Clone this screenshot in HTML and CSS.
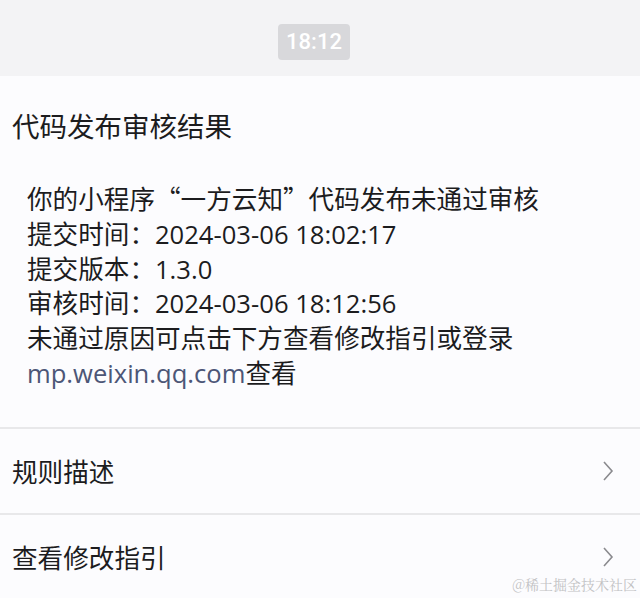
FILE: index.html
```html
<!DOCTYPE html>
<html>
<head>
	<meta charset="utf-8">
	<title>代码发布审核结果</title>
	<link rel="stylesheet" href="styles.css">
</head>
<body>
	<div class="top">
		<span class="time">18:12</span>
	</div>
	<div class="card">
		<h1>代码发布审核结果</h1>
		<div class="content">
			<p>你的小程序<span class="cjk">“</span>一方云知<span class="cjk">”</span>代码发布未通过审核</p>
			<p>提交时间：2024-03-06 18:02:17</p>
			<p>提交版本：1.3.0</p>
			<p>审核时间：2024-03-06 18:12:56</p>
			<p>未通过原因可点击下方查看修改指引或登录</p>
			<p><span class="link">mp.weixin.qq.com</span>查看</p>
		</div>
		<div class="row">
			<span>规则描述</span>
			<svg class="arrow" width="12" height="22" viewBox="0 0 12 22"><path d="M2 2 L10 11 L2 20" fill="none" stroke="#8a8a8e" stroke-width="1.6"/></svg>
		</div>
		<div class="row">
			<span>查看修改指引</span>
			<svg class="arrow" width="12" height="22" viewBox="0 0 12 22"><path d="M2 2 L10 11 L2 20" fill="none" stroke="#8a8a8e" stroke-width="1.6"/></svg>
		</div>
	</div>
	<div class="mark">@稀土掘金技术社区</div>
</body>
</html>
```

FILE: styles.css
```css
body {
	margin: 0;
	background-color: #fcfcfe;
	font-family: "Open Sans", "Noto Sans CJK SC", sans-serif;
	color: #1c1c1e;
	height: 598px;
	overflow: hidden;
	position: relative;
}

.top {
	height: 76px;
	box-sizing: border-box;
	padding-top: 8px;
	background-color: #f3f3f5;
	display: flex;
	justify-content: center;
	align-items: center;
}

.time {
	background-color: #d8d8db;
	color: #ffffff;
	font-family: "Roboto", sans-serif;
	font-weight: 500;
	font-size: 22px;
	line-height: 36px;
	width: 72px;
	text-align: center;
	border-radius: 4px;
	margin-right: 12px;
}

.card {
	background-color: #fcfcfe;
}

h1 {
	font-size: 27.5px;
	font-weight: normal;
	line-height: 36px;
	margin: 0;
	padding: 33px 0 0 12px;
}

.content {
	padding: 38px 0 35px 27px;
}

.content p {
	margin: 0;
	font-size: 25.6px;
	line-height: 34.8px;
}

.cjk {
	font-family: "Noto Sans CJK SC", sans-serif;
	line-height: 1;
}

.link {
	color: #4c5677;
}

.row {
	display: flex;
	justify-content: space-between;
	align-items: center;
	height: 84px;
	border-top: 2px solid #e8e8ea;
	padding: 0 26px 0 12px;
	font-size: 25.6px;
}

.mark {
	position: absolute;
	right: 3px;
	bottom: 4px;
	font-family: "Noto Serif CJK SC", "Liberation Serif", serif;
	font-size: 14px;
	color: #c2c2c4;
}
```
